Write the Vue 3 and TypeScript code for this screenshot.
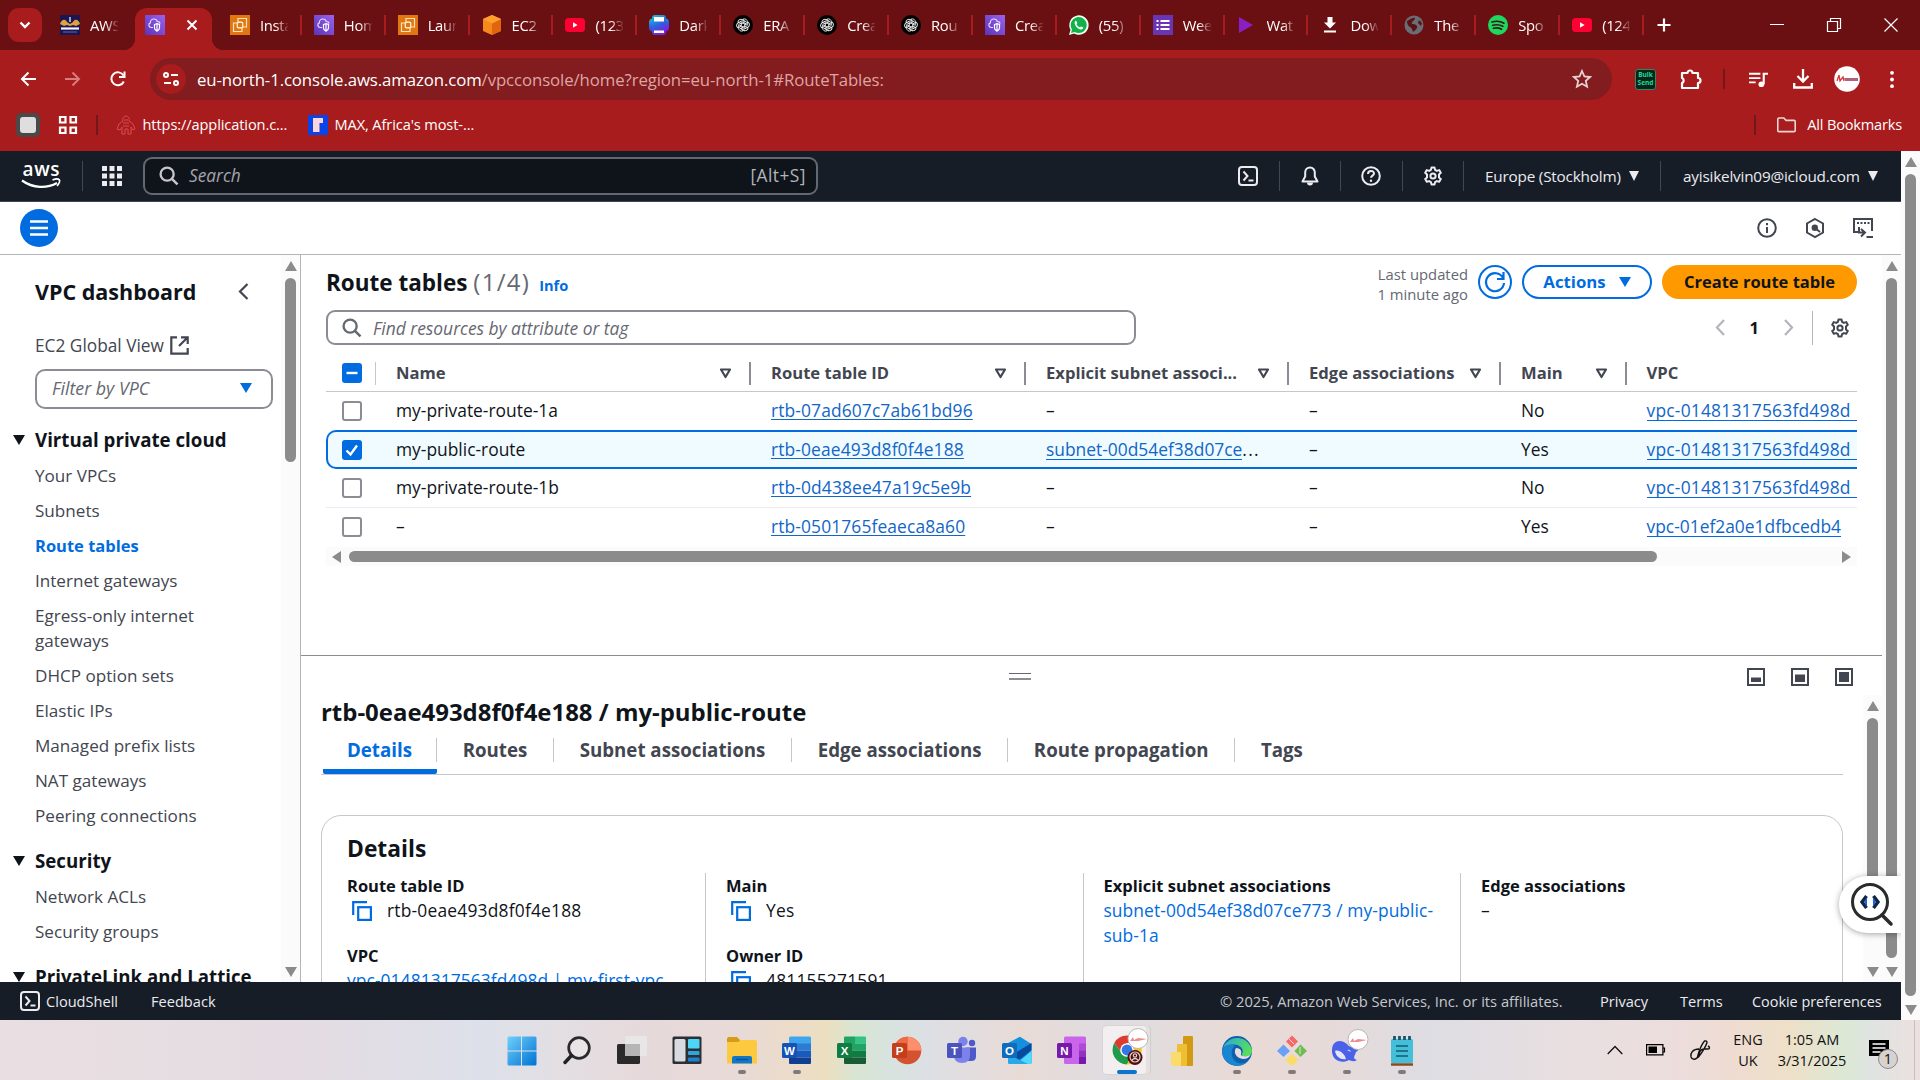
<script setup lang="ts">
interface BrowserTab { icon: string; label: string; active?: boolean; plain?: boolean }
interface RouteRow { name: string; id: string; subnet?: string; main: string; vpc: string; selected?: boolean; cut?: boolean }
interface TaskItem { icon: string; running?: boolean; active?: boolean }

const vpcIcon = '<defs><linearGradient id="vp" x1="0" y1="1" x2="1" y2="0"><stop offset="0" stop-color="#5a34b8"/><stop offset="1" stop-color="#9a62f0"/></linearGradient></defs><rect width="20" height="20" fill="url(#vp)"/><path d="M8 12.500H6.300a2.400 2.400 0 0 1-1-4.600C5.300 5.800 6.800 4 8.900 4c1.700 0 3 1 3.400 2.500 1.500-.1 2.500.7 2.900 2" fill="none" stroke="#e9dcff" stroke-width="1.200"/><path d="M9.500 9.500 12 8.600l2.500.9v3.500c0 1.500-1.200 2.400-2.500 3.100-1.300-.7-2.500-1.600-2.500-3.100zM12 8.800v7" fill="none" stroke="#fff" stroke-width="1.200"/>'
const ec2Icon = '<rect width="20" height="20" fill="#e0780f"/><path d="M8 7V3.500h8.500V12H13M7 8H3.500v8.500H12V13" fill="none" stroke="#ffe2bd" stroke-width="1.200"/><rect x="7.300" y="7.300" width="5.400" height="5.400" rx="1" fill="none" stroke="#ffe9cd" stroke-width="1.400"/>'
const ytIcon = '<rect y="3" width="20" height="14" rx="3.500" fill="#ff0033"/><path d="M8 7.300v5.400l4.600-2.700z" fill="#fff"/>'
const petal = [0, 60, 120, 180, 240, 300].map(a => `<path d="M10 4.200c2-1 4.300.3 4.300 2.700v3.500L10 8z" transform="rotate(${a} 10 10)"/>`).join('')
const gptIcon = `<circle cx="10" cy="10" r="10" fill="#000"/><g fill="none" stroke="#e8e8e8" stroke-width="1">${petal}</g>`

const favicons: Record<string, string> = {
  mentor: '<rect width="20" height="20" fill="#1c1550"/><path d="M0 9c1-4 5-6 7-2l3 2 3-2c2-4 6-2 7 2l-4 2-3-1-3 1-3-1-3 1z" fill="#e2a13c"/><path d="M10 2v5" stroke="#c9d3f3" stroke-width="1.500"/><path d="M1 13.500h18" stroke="#f1f1ff" stroke-width="2.200"/><path d="M3 17h14" stroke="#5f66b8"/>',
  vpc: vpcIcon,
  ec2: ec2Icon,
  cube: '<path d="M10 0 19 4v12l-9 4-9-4V4z" fill="#f58a1c"/><path d="M10 8.500v11.500l9-4V4z" fill="#e2640f"/><path d="M10 0 19 4l-9 4.500L1 4z" fill="#ff9f2e"/>',
  yt: ytIcon,
  printer: '<defs><linearGradient id="dk" x1="0" y1="0" x2=".4" y2="1"><stop offset="0" stop-color="#17c3d8"/><stop offset=".6" stop-color="#2f5fe0"/><stop offset="1" stop-color="#7a21dd"/></linearGradient></defs><rect x="0" y="3.500" width="20" height="13" rx="4" fill="url(#dk)"/><rect x="3" width="14" height="20" rx="3" fill="url(#dk)"/><rect x="5" y="2" width="10" height="4.500" fill="#fff"/><rect x="5" y="15.500" width="10" height="2.500" fill="#fff"/>',
  gpt: gptIcon,
  wa: '<path d="M0 20 1.500 14.800A9.700 9.700 0 1 1 5.200 18.500z" fill="#f2fff4"/><path d="M2 18l1-3.600A8 8 0 1 1 5.800 17z" fill="#12b24a"/><path d="M7 5.500 8.300 8l-.8 1.200c.8 1.500 1.800 2.500 3.400 3.200l1.200-1 2.300 1.200c-.3 1.700-1.700 2.200-3.200 1.800C8.500 13.600 6.300 11.300 5.700 8.500 5.500 7 6 6 7 5.500z" fill="#fff"/>',
  form: '<rect width="20" height="20" fill="#6a35b5"/><path d="M7.500 6h9M7.500 10h9M7.500 14h9" stroke="#fff" stroke-width="2"/><path d="M3.500 6h2M3.500 10h2M3.500 14h2" stroke="#fff" stroke-width="2"/>',
  play: '<path d="M2 2v16l14-8z" fill="#8a1fc4"/>',
  down: '<path d="M7.500 2h5v5.500H16L10 13.500 4 7.500h3.500zM4 15.500h12v2H4z" fill="#fff"/>',
  globe: '<circle cx="10" cy="10" r="9.500" fill="#6b6d74"/><path d="M3 6c3-1 5-4 8-3 0 3-4 3-3 6 3 0 6 1 5 4-1 2-3 3-4 4-1-3-1-4-3-5s-3-3-3-6zM15 5l3 3-1 3-3-3z" fill="#5b1215"/>',
  spot: '<circle cx="10" cy="10" r="10" fill="#1ed760"/><path d="M4 7c4-1.200 8.500-.8 12 1.200M4.800 10.300c3.500-1 7-.6 10 1M5.500 13.300c2.800-.7 5.500-.4 8 1" stroke="#3c1515" stroke-width="1.700" fill="none" stroke-linecap="round"/>',
}

const tabs: BrowserTab[] = [
  { icon: 'mentor', label: 'AWS', plain: true },
  { icon: 'vpc', label: '', active: true, plain: true },
  { icon: 'ec2', label: 'Insta' },
  { icon: 'vpc', label: 'Hom' },
  { icon: 'ec2', label: 'Laun' },
  { icon: 'cube', label: 'EC2' },
  { icon: 'yt', label: '(123' },
  { icon: 'printer', label: 'Dark' },
  { icon: 'gpt', label: 'ERA' },
  { icon: 'gpt', label: 'Crea' },
  { icon: 'gpt', label: 'Rou' },
  { icon: 'vpc', label: 'Crea' },
  { icon: 'wa', label: '(55)' },
  { icon: 'form', label: 'Wee' },
  { icon: 'play', label: 'Wat' },
  { icon: 'down', label: 'Dow' },
  { icon: 'globe', label: 'The' },
  { icon: 'spot', label: 'Spo' },
  { icon: 'yt', label: '(124' },
]

const vpcLinks = ['Your VPCs', 'Subnets', 'Route tables', 'Internet gateways', 'Egress-only internet gateways', 'DHCP option sets', 'Elastic IPs', 'Managed prefix lists', 'NAT gateways', 'Peering connections']
const securityLinks = ['Network ACLs', 'Security groups']

const columns = ['Name', 'Route table ID', 'Explicit subnet associ...', 'Edge associations', 'Main', 'VPC']
const rows: RouteRow[] = [
  { name: 'my-private-route-1a', id: 'rtb-07ad607c7ab61bd96', main: 'No', vpc: 'vpc-01481317563fd498d', cut: true },
  { name: 'my-public-route', id: 'rtb-0eae493d8f0f4e188', subnet: 'subnet-00d54ef38d07ce', main: 'Yes', vpc: 'vpc-01481317563fd498d', selected: true, cut: true },
  { name: 'my-private-route-1b', id: 'rtb-0d438ee47a19c5e9b', main: 'No', vpc: 'vpc-01481317563fd498d', cut: true },
  { name: '–', id: 'rtb-0501765feaeca8a60', main: 'Yes', vpc: 'vpc-01ef2a0e1dfbcedb4' },
]
const detailTabs = ['Details', 'Routes', 'Subnet associations', 'Edge associations', 'Route propagation', 'Tags']

const gear = '<path d="M8.500 1.500h3l.6 2.400 1.700 1 2.400-.8 1.600 2.700-1.800 1.700v2.900l1.800 1.700-1.600 2.700-2.400-.7-1.700 1-.6 2.400h-3l-.6-2.400-1.700-1-2.400.7-1.600-2.700L4 11.400V8.500L2.200 6.800l1.600-2.700 2.400.8 1.700-1z" fill="none" stroke="currentColor" stroke-width="2" stroke-linejoin="round"/><circle cx="10" cy="10" r="2.600" fill="none" stroke="currentColor" stroke-width="2"/>'
const shell = '<rect x="1" y="1" width="18" height="18" rx="3" fill="none" stroke="currentColor" stroke-width="2"/><path d="M5.500 5.500 9.500 10l-4 4.500M10.500 14.500h5" fill="none" stroke="currentColor" stroke-width="2"/>'
const copy = '<path d="M1.200 14V1.200H15" fill="none" stroke="currentColor" stroke-width="2.200"/><rect x="6.200" y="6.200" width="12.700" height="12.700" fill="none" stroke="currentColor" stroke-width="2.200"/>'
const lens = '<circle cx="7.700" cy="7.700" r="6.200" fill="none" stroke="currentColor" stroke-width="2.200"/><path d="M12 12l5.500 5.500" stroke="currentColor" stroke-width="2.400"/>'

const letter = (l: string, c: string) => `<rect x="0" y="7" width="15" height="15" rx="1.500" fill="${c}"/><text x="7.500" y="18.600" font-family="Liberation Sans" font-weight="700" font-size="11.500" fill="#fff" text-anchor="middle">${l}</text>`
const taskIcons: Record<string, string> = {
  start: '<defs><linearGradient id="wn" x1="0" y1="0" x2="1" y2="1"><stop offset="0" stop-color="#6fd0fb"/><stop offset="1" stop-color="#0072d3"/></linearGradient></defs><path d="M.5 2q0-1.500 1.500-1.500h12V14.500H.5zM15 .5h13q1.500 0 1.500 1.500v12.500H15zM.5 15.500H14v14H2q-1.500 0-1.500-1.500zM15 15.500h14.500V28q0 1.500-1.500 1.500H15z" fill="url(#wn)"/>',
  search: '<circle cx="17" cy="12" r="10.300" fill="#e9e4e6" stroke="#2a2a2c" stroke-width="2.700"/><path d="M9.500 19.500 3 26.500" stroke="#222" stroke-width="3.400" stroke-linecap="round"/>',
  desk: '<rect x="0" y="8" width="23" height="20" rx="1.500" fill="#2a2a2a"/><rect x="8" y="0" width="22" height="20" rx="1.500" fill="#e8e8e8" opacity=".85"/><path d="M8 8h15v12H8z" fill="#b5b5b5"/>',
  widget: '<rect x=".5" y=".5" width="29" height="27.500" rx="1.500" fill="#2d3033"/><rect x="2.500" y="3" width="11" height="22.500" rx="1.500" fill="#d9dbe0"/><rect x="16" y="3" width="11.500" height="9.500" rx="1" fill="#4dd5fa"/><rect x="16" y="15" width="11.500" height="4" rx="1" fill="#2ea5df"/><rect x="16" y="21.500" width="11.500" height="4" rx="1" fill="#1c82d2"/>',
  folder: '<path d="M0 3q0-2 2-2h8l3 3v6H0z" fill="#d79a1b"/><path d="M0 6h11l3-2h14q2 0 2 2v21.500H0z" fill="#fdc93f"/><path d="M5 27.500V22q0-2 2-2h16q2 0 2 2v5.500z" fill="#1476c6"/><path d="M9 23.500h12" stroke="#0b5391" stroke-width="1.500"/>',
  word: '<path d="M7 2q0-1.500 1.500-1.500h19.500q1 0 1 1.500v6H7z" fill="#41a5ee"/><path d="M7 7.500h22v7H7z" fill="#2b7cd3"/><path d="M7 14.500h22v7H7z" fill="#185abd"/><path d="M7 21.500h22V27q0 1-1 1H8q-1 0-1-1z" fill="#103f91"/>' + letter('W', '#1553b4'),
  excel: '<path d="M7 1.500q0-1 1-1h10v14H7z" fill="#21a366"/><path d="M18 .5h10q1 0 1 1v6H18z" fill="#33c481"/><path d="M18 7.500h11v7H18z" fill="#21a366"/><path d="M7 14.500h22v7H7z" fill="#107c41"/><path d="M7 21.500h22V27q0 1-1 1H8q-1 0-1-1z" fill="#185c37"/>' + letter('X', '#107c41'),
  ppt: '<circle cx="15.500" cy="14.500" r="13.800" fill="#d35230"/><path d="M15.500.7a13.800 13.800 0 0 1 13.800 13.800H15.500z" fill="#ff8f6b"/><path d="M15.500.7v13.800H1.700A13.800 13.800 0 0 1 15.500.7z" fill="#ed6c47"/>' + letter('P', '#c43e1c'),
  teams: '<circle cx="16" cy="5.500" r="4.700" fill="#7b83eb"/><circle cx="25" cy="7" r="3.200" fill="#5059c9"/><path d="M19 11.500h10v9q0 4.500-5 4.500h-4z" fill="#5059c9"/><path d="M7 11.500h16V19q0 8-8 8t-8-8z" fill="#7b83eb"/>' + letter('T', '#4b53bc'),
  outlook: '<path d="M6 7 18 .8 29.500 8v18.500q0 1.500-1.500 1.500H8q-2 0-2-2z" fill="#1490df"/><path d="M10 19 29.500 7v7L16 25z" fill="#0a4a9e"/><path d="M14 28 29.500 15v11.500q0 1.500-1.500 1.500z" fill="#50d9ff"/><path d="M6 18l20 10H8q-2 0-2-2z" fill="#28a8ea"/>' + letter('O', '#0f6cbd'),
  onenote: '<rect x="7" y=".5" width="22" height="27.500" rx="1.500" fill="#ca64ea"/><path d="M22 7.500h7v7h-7z" fill="#ae4bd5"/><path d="M22 14.500h7v6.500h-7z" fill="#9332bf"/><path d="M22 21h7v6q0 1-1 1h-6z" fill="#7719aa"/>' + letter('N', '#7719aa'),
  chrome: '<circle cx="15" cy="15" r="14.500" fill="#fff"/><path d="M15 .5A14.500 14.500 0 0 1 28 8H15L9 17 2.200 8A14.600 14.600 0 0 1 15 .5z" fill="#de3b30"/><path d="M2.200 8A14.600 14.600 0 0 0 15 29.500l6-11.500-12-1z" fill="#219a4a"/><path d="M28 8a14.600 14.600 0 0 1-13 21.500L21.500 15 18 8z" fill="#fbc116"/><circle cx="15" cy="15" r="6.800" fill="#fff"/><circle cx="15" cy="15" r="5.400" fill="#3277e6"/><circle cx="26" cy="3.500" r="10" fill="#fff" stroke="#b9b9b9"/><path d="M18 6l3-4 1 3 4-2 9 1-9 2z" fill="#ee8c8c"/><circle cx="23" cy="22.500" r="7.500" fill="#4d1010"/><circle cx="23" cy="22" r="5" fill="none" stroke="#e5cfcf" stroke-width="1.200"/><circle cx="23" cy="20.500" r="1.700" fill="none" stroke="#e5cfcf" stroke-width="1.200"/><path d="M20 25q3-3 6 0" stroke="#e5cfcf" stroke-width="1.300" fill="none"/>',
  bi: '<rect x="16" y="0" width="10" height="30" rx="1" fill="#d29a13"/><rect x="10" y="8" width="10" height="22" rx="1" fill="#efbf33"/><rect x="4" y="16" width="10" height="14" rx="1" fill="#fbdc6a"/>',
  edge: '<defs><linearGradient id="eg" x1="0" y1="0" x2="1" y2=".4"><stop offset="0" stop-color="#2ba6dd"/><stop offset="1" stop-color="#57dd5d"/></linearGradient></defs><circle cx="15" cy="15" r="15" fill="#0f5fae"/><path d="M1 12A15 15 0 0 1 30 15c0 5-5 6-9 5-2-1-1-2-.500-3C22 13 18 8.500 12 8.500 7 8.500 3 10 1 12z" fill="url(#eg)"/><path d="M0 15C2 9 9 7 13 10c-4 2-5 10 0 15 3 3 8 3 12 1A15 15 0 0 1 0 15z" fill="#1a86cf"/><path d="M14 12c5 0 6 4 5 6s4 3.500 9.500 1c-2 4-7 5-11 3s-6-6-3.500-10z" fill="#e6dcdd"/>',
  git: '<path d="M15 0l6 6-6 6-6-6z" fill="#f4686a" transform="translate(0 -.5)"/><path d="M6.500 8.500l6.500 6.500-6.500 6L0 15z" fill="#6ba0f7"/><path d="M23.500 8.500 30 15l-6.500 6-6-6z" fill="#6fbb55"/><path d="M15 18l6.500 6L15 30l-6.500-6z" fill="#fbdc67"/><path d="M12 3l5 5M23 11v7" stroke="#fff" stroke-width="1" opacity=".7"/>',
  whale: '<path d="M1 9c3-5 9-5 14-1 2 3 4 3 6 2 2 0 4-1 7-3 0 5-2 8-4 9-1 3-2 4-2 6 1 1 2 2 3 2-3 2-6 1-8 0C10 28 1 25 0 16c0-3 0-5 1-7z" fill="#4a62e8"/><path d="M3 15c4-2 10 3 11 8-5 1-10-2-11-8zM15 14q3-1 4 2" fill="#e7e4f6"/><circle cx="26" cy="3.500" r="10" fill="#fff" stroke="#b9b9b9"/><path d="M18 6l3-4 1 3 4-2 9 1-9 2z" fill="#ee8c8c"/>',
  note: '<rect x="4" y="3" width="22" height="24" rx="1.500" fill="#43bfd9"/><path d="M4 28.500h22" stroke="#8a4a1c" stroke-width="2.500"/><path d="M9 10h12M9 15h12M9 20h12" stroke="#155c72" stroke-width="1.700"/><path d="M7.500 0v4M12.500 0v4M17.500 0v4M22.500 0v4" stroke="#1c5567" stroke-width="2.800"/>',
}
const tasks: TaskItem[] = [
  { icon: 'start' }, { icon: 'search' }, { icon: 'desk' }, { icon: 'widget' },
  { icon: 'folder', running: true }, { icon: 'word', running: true }, { icon: 'excel' }, { icon: 'ppt' },
  { icon: 'teams' }, { icon: 'outlook' }, { icon: 'onenote' }, { icon: 'chrome', active: true },
  { icon: 'bi' }, { icon: 'edge', running: true }, { icon: 'git', running: true }, { icon: 'whale', running: true }, { icon: 'note', running: true },
]
</script>

<template>
  <div class="screen">
    <div class="tabstrip">
      <button class="tab-search"><svg width="12" height="8" viewBox="0 0 12 8"><path d="M1.500 1.500 6 6l4.500-4.500" fill="none" stroke="#fff" stroke-width="2.400" /></svg></button>
      <div v-for="(t, i) in tabs" :key="i" class="tab" :class="{ active: t.active, plain: t.plain }">
        <svg class="favicon" viewBox="0 0 20 20" preserveAspectRatio="none" v-html="favicons[t.icon]"></svg>
        <span v-if="!t.active" class="tab-label">{{ t.label }}</span>
        <svg v-else class="tab-close" viewBox="0 0 12 12"><path d="M1.500 1.500l9 9M10.500 1.500l-9 9" stroke="#fff" stroke-width="2" /></svg>
      </div>
      <svg class="new-tab" viewBox="0 0 14 14"><path d="M7 .5v13M.5 7h13" stroke="#fff" stroke-width="2.200" /></svg>
      <div class="win-controls">
        <svg width="14" height="14"><path d="M0 6.500h14" stroke="#fff" /></svg>
        <svg width="14" height="14"><path d="M.5 3.500h10v10H.5zM3.500 3.500v-3h10v10h-3" fill="none" stroke="#fff" stroke-width="1.200" /></svg>
        <svg width="14" height="14"><path d="M.5.5l13 13M13.500.5l-13 13" stroke="#fff" stroke-width="1.200" /></svg>
      </div>
    </div>

    <div class="toolbar">
      <svg class="nav" viewBox="0 0 16 16"><path d="M16 8H2M8.500 1.500 2 8l6.500 6.500" fill="none" stroke="#fff" stroke-width="2" /></svg>
      <svg class="nav" viewBox="0 0 16 16"><path d="M0 8h14M7.500 1.500 14 8l-6.500 6.500" fill="none" stroke="#d97c7c" stroke-width="2" /></svg>
      <svg class="nav" viewBox="0 0 16 16"><path d="M13.800 10.500A6.500 6.500 0 1 1 13.500 4.500M14.500.5v5.500H9" fill="none" stroke="#fff" stroke-width="2" /></svg>
      <div class="omnibox">
        <span class="tune"><svg width="16" height="14" viewBox="0 0 16 14"><circle cx="3" cy="3" r="2" /><path d="M8 3h7M1 11h7" /><circle cx="13" cy="11" r="2" /></svg></span>
        <span class="url">eu-north-1.console.aws.amazon.com<i>/vpcconsole/home?region=eu-north-1#RouteTables:</i></span>
        <svg class="star" viewBox="0 0 20 20"><path d="M10 2l2.400 5.400 5.800.6-4.400 3.900 1.300 5.800-5.100-3-5.100 3 1.300-5.800L1.800 8l5.800-.6z" fill="none" stroke="#e8d0d0" stroke-width="1.800" /></svg>
      </div>
      <span class="bulk">Bulk<br />Send</span>
      <svg class="puzzle" viewBox="0 0 22 22"><path d="M2 5h5.500a2.500 2.500 0 0 1 5 0H18v5a2.500 2.500 0 0 1 0 5v5H2v-5a2.700 2.700 0 0 0 0-5z" fill="none" stroke="#fff" stroke-width="2.200" stroke-linejoin="round" /></svg>
      <span class="vline"></span>
      <svg class="music" viewBox="0 0 20 20"><path d="M0 4h12M0 8.500h12M0 13h7" stroke="#fff" stroke-width="2" /><path d="M15.500 15V4H20" fill="none" stroke="#fff" stroke-width="2.200" /><circle cx="13" cy="15" r="3" fill="#fff" /></svg>
      <svg class="dl" viewBox="0 0 20 20"><path d="M10 0v12M4.500 7l5.500 5.500L15.500 7M1.200 14v4.500h17.600V14" fill="none" stroke="#fff" stroke-width="2.300" /></svg>
      <svg class="avatar" viewBox="0 0 26 26"><circle cx="13" cy="13" r="12.800" fill="#fff" /><path d="M3 15l2-6 1 6 3-4 1 4" fill="none" stroke="#d33" stroke-width="1.300" /><path d="M10 12h14v3H11z" fill="#b0627a" /></svg>
      <svg class="dots" viewBox="0 0 6 20"><circle cx="3" cy="3" r="2" /><circle cx="3" cy="10" r="2" /><circle cx="3" cy="17" r="2" /></svg>
    </div>

    <div class="bookmarks">
      <span class="stop"><span></span></span>
      <svg class="apps" viewBox="0 0 20 20"><path d="M2 2h5.500v5.500H2zM12.500 2H18v5.500h-5.500zM2 12.500h5.500V18H2zM12.500 12.500H18V18h-5.500z" fill="none" stroke="#fff" stroke-width="2.200" /></svg>
      <span class="vline"></span>
      <svg class="bm-icon" viewBox="0 0 20 20"><path d="M10 1a3.500 3.500 0 0 1 3 5l4 3 2 5-2 1-2-3v7h-3v-5H9v5H6v-7l-2 3-3-1 2-5 4-3a3.500 3.500 0 0 1 3-5zM7 8h6M8 5h4M7 11h6" fill="none" stroke="#d84a4e" stroke-width="1" /></svg>
      <span class="bm-text first">https://application.c...</span>
      <svg class="bm-icon blue" viewBox="0 0 20 20"><rect width="20" height="20" fill="#0a43e8" /><path d="M5 3h10v5h-3.500v9H5z" fill="#fbd5dc" /></svg>
      <span class="bm-text">MAX, Africa's most-...</span>
      <span class="vline right"></span>
      <svg class="folder" viewBox="0 0 22 18"><path d="M1.200 2.500q0-1.300 1.300-1.300h5.500l2.500 2.600h9q1.300 0 1.300 1.300v10q0 1.300-1.300 1.300h-17q-1.300 0-1.300-1.300z" fill="none" stroke="#ecd6d6" stroke-width="1.800" /></svg>
      <span class="bm-text all">All Bookmarks</span>
    </div>

    <div class="viewport">
      <div class="page">
        <header class="aws-header">
          <svg class="aws-logo" viewBox="0 0 40 28"><text x="20" y="14" text-anchor="middle" font-family="Open Sans" font-weight="600" font-size="19" fill="#fff" textLength="37">aws</text><path d="M1 18.500c11 8 25 8 35 2.500" fill="none" stroke="#fff" stroke-width="2.300" /><path d="M31.500 18c3-1.200 6-1 6.800-.2.700 1.200-.5 4.200-2.200 6.200" fill="none" stroke="#fff" stroke-width="1.700" /></svg>
          <span class="hsep"></span>
          <svg class="grid9" viewBox="0 0 20 20"><path d="M0 0h5v5H0zM7.500 0h5v5h-5zM15 0h5v5h-5zM0 7.500h5v5H0zM7.500 7.500h5v5h-5zM15 7.500h5v5h-5zM0 15h5v5H0zM7.500 15h5v5h-5zM15 15h5v5h-5z" fill="#ebebf0" /></svg>
          <div class="global-search">
            <svg width="19" height="19" viewBox="0 0 18 18" v-html="lens"></svg>
            <em>Search</em><span>[Alt+S]</span>
          </div>
          <div class="header-icons">
            <span class="hicon"><svg viewBox="0 0 20 20" v-html="shell"></svg></span>
            <span class="hicon"><svg viewBox="0 0 20 20"><path d="M10 1.500c-3 0-4.800 2.200-4.800 5v4L2.500 15.500h15L14.800 10.500v-4c0-2.800-1.800-5-4.800-5z" fill="none" stroke="currentColor" stroke-width="2" stroke-linejoin="round" /><path d="M7 16.500a3 3 0 0 0 6 0z" fill="currentColor" /></svg></span>
            <span class="hicon"><svg viewBox="0 0 20 20"><circle cx="10" cy="10" r="8.800" fill="none" stroke="currentColor" stroke-width="2" /><path d="M7 8c0-4 6-4 6-.5 0 2-3 2.200-3 4.300" fill="none" stroke="currentColor" stroke-width="2" /><circle cx="10" cy="14.700" r="1.200" fill="currentColor" /></svg></span>
            <span class="hicon"><svg viewBox="0 0 20 20" v-html="gear"></svg></span>
          </div>
          <span class="region">Europe (Stockholm)<b class="caret"></b></span>
          <span class="account">ayisikelvin09@icloud.com<b class="caret"></b></span>
        </header>

        <div class="subbar">
          <button class="burger"><svg width="18" height="16" viewBox="0 0 18 16"><path d="M0 1.500h18M0 8h18M0 14.500h18" stroke="#fff" stroke-width="2.300" /></svg></button>
          <svg class="tool" viewBox="0 0 20 20"><circle cx="10" cy="10" r="8.800" fill="none" stroke="currentColor" stroke-width="2" /><path d="M10 9v6M10 5v2.200" stroke="currentColor" stroke-width="2" /></svg>
          <svg class="tool" viewBox="0 0 20 20"><path d="M10 1l8 4.500v9L10 19l-8-4.500v-9z" fill="none" stroke="currentColor" stroke-width="2" /><circle cx="9.800" cy="9.800" r="3.200" fill="currentColor" /><path d="M10 10l5 4" stroke="currentColor" stroke-width="2" /></svg>
          <svg class="tool" viewBox="0 0 20 20"><path d="M5 14H1V1h18v12M4 5h2M7.500 5h2M11 5h2M14.500 5h2" fill="none" stroke="currentColor" stroke-width="2" /><path d="M6 9v5.500h5M8 11l4 3.500L8 18.500M13.500 19H20" fill="none" stroke="currentColor" stroke-width="2" /></svg>
        </div>

        <div class="body">
          <nav class="sidebar">
            <div class="side-content">
              <div class="side-title">VPC dashboard<svg width="11" height="17" viewBox="0 0 11 17"><path d="M9.500 1 2 8.500 9.500 16" fill="none" stroke="#424650" stroke-width="2.200" /></svg></div>
              <div class="side-ext">EC2 Global View<svg width="19" height="19" viewBox="0 0 19 19"><path d="M7 1.300H1.300v16.400h16.400V12M11 1.300h6.700V8M17.500 1.500 9 10" fill="none" stroke="currentColor" stroke-width="2.200" /></svg></div>
              <div class="vpc-filter"><em>Filter by VPC</em><b class="caret blue"></b></div>
              <div class="side-head"><b class="caret"></b>Virtual private cloud</div>
              <a v-for="l in vpcLinks" :key="l" class="side-link" :class="{ current: l === 'Route tables' }">{{ l }}</a>
              <div class="side-head later"><b class="caret"></b>Security</div>
              <a v-for="l in securityLinks" :key="l" class="side-link">{{ l }}</a>
              <div class="side-head later"><b class="caret"></b>PrivateLink and Lattice</div>
            </div>
            <div class="scroll side-scroll"><i class="up"></i><span class="thumb"></span><i class="down"></i></div>
          </nav>

          <main class="content">
            <section class="list">
              <div class="list-head">
                <h1>Route tables <span>(1/4)</span></h1>
                <a class="info">Info</a>
                <div class="updated">Last updated<br />1 minute ago</div>
                <button class="refresh"><svg width="22" height="22" viewBox="0 0 22 22"><path d="M19 7A9 9 0 1 0 20 12M19.500 1v7H13" fill="none" stroke="#006ce0" stroke-width="2.200" /></svg></button>
                <button class="actions">Actions<b class="caret blue"></b></button>
                <button class="create">Create route table</button>
              </div>
              <div class="list-filter">
                <div class="find"><svg width="19" height="19" viewBox="0 0 18 18" v-html="lens"></svg><em>Find resources by attribute or tag</em></div>
                <div class="pager">
                  <svg width="10" height="17" viewBox="0 0 10 17"><path d="M9 1 2 8.500 9 16" fill="none" stroke="#b4b4bb" stroke-width="2.200" /></svg>
                  <b>1</b>
                  <svg width="10" height="17" viewBox="0 0 10 17"><path d="M1 1l7 7.500L1 16" fill="none" stroke="#b4b4bb" stroke-width="2.200" /></svg>
                  <span class="psep"></span>
                  <svg width="20" height="20" viewBox="0 0 20 20" v-html="gear"></svg>
                </div>
              </div>
              <div class="grid-row head">
                <div class="cell check"><span class="box on"><svg viewBox="0 0 20 20"><path d="M4.500 10h11" stroke="#fff" stroke-width="2.400" /></svg></span></div>
                <div v-for="(c, i) in columns" :key="c" class="cell">
                  <span class="col-name">{{ c }}</span>
                  <svg v-if="i < 5" width="13" height="11" viewBox="0 0 13 11"><path d="M2 1.500h9L6.500 9z" fill="none" stroke="#424650" stroke-width="2.200" stroke-linejoin="round" /></svg>
                </div>
              </div>
              <div v-for="r in rows" :key="r.id" class="grid-row" :class="{ selected: r.selected }">
                <div class="cell check"><span class="box" :class="{ on: r.selected }"><svg v-if="r.selected" viewBox="0 0 20 20"><path d="M4.500 10.500 8.500 14.500 15 5.500" fill="none" stroke="#fff" stroke-width="2.400" /></svg></span></div>
                <div class="cell">{{ r.name }}</div>
                <div class="cell"><a class="id">{{ r.id }}</a></div>
                <div class="cell"><template v-if="r.subnet"><a class="low">{{ r.subnet }}</a><span class="more">...</span></template><template v-else>–</template></div>
                <div class="cell">–</div>
                <div class="cell">{{ r.main }}</div>
                <div class="cell vpc"><a class="low" :class="{ cut: r.cut }">{{ r.vpc }}</a></div>
              </div>
              <div class="hscroll"><i class="left"></i><span class="hthumb"></span><i class="right"></i></div>
            </section>

            <section class="split">
              <div class="split-bar">
                <span class="handle"></span>
                <div class="split-icons">
                  <svg viewBox="0 0 18 18"><path d="M1 1h16v16H1z" fill="none" stroke="#424650" stroke-width="2" /><path d="M4 9.500h10v4.500H4z" fill="#424650" /></svg>
                  <svg viewBox="0 0 18 18"><path d="M1 1h16v16H1z" fill="none" stroke="#424650" stroke-width="2" /><path d="M4 6.500h10V14H4z" fill="#424650" /></svg>
                  <svg viewBox="0 0 18 18"><path d="M1 1h16v16H1z" fill="none" stroke="#424650" stroke-width="2" /><path d="M4 4h10v10H4z" fill="#424650" /></svg>
                </div>
              </div>
              <div class="split-body">
                <div class="split-content">
                  <h2>rtb-0eae493d8f0f4e188 / my-public-route</h2>
                  <div class="dtabs"><div v-for="d in detailTabs" :key="d" class="dtab" :class="{ current: d === 'Details' }"><span>{{ d }}</span></div></div>
                  <div class="card">
                    <h3>Details</h3>
                    <div class="facts">
                      <div class="fact">
                        <label>Route table ID</label>
                        <p class="copyable"><svg viewBox="0 0 20 20" v-html="copy"></svg>rtb-0eae493d8f0f4e188</p>
                        <label>VPC</label>
                        <p class="link">vpc-01481317563fd498d | my-first-vpc</p>
                      </div>
                      <div class="fact">
                        <label>Main</label>
                        <p class="copyable"><svg viewBox="0 0 20 20" v-html="copy"></svg>Yes</p>
                        <label>Owner ID</label>
                        <p class="copyable"><svg viewBox="0 0 20 20" v-html="copy"></svg>481155271591</p>
                      </div>
                      <div class="fact">
                        <label>Explicit subnet associations</label>
                        <p class="link">subnet-00d54ef38d07ce773 / my-public-<br />sub-1a</p>
                      </div>
                      <div class="fact">
                        <label>Edge associations</label>
                        <p>–</p>
                      </div>
                    </div>
                  </div>
                </div>
                <div class="scroll split-scroll"><i class="up"></i><span class="thumb"></span><i class="down"></i></div>
              </div>
            </section>
          </main>
          <div class="scroll main-scroll"><i class="up"></i><span class="thumb"></span><i class="down"></i></div>
          <div class="inspector">
            <svg width="44" height="46" viewBox="0 0 44 46"><circle cx="19" cy="20" r="17.500" fill="none" stroke="#2b2b2b" stroke-width="3" /><path d="M31 33l9 9" stroke="#2b2b2b" stroke-width="3.500" stroke-linecap="round" /><path d="M15.500 14 11 20l4.500 6" fill="none" stroke="#14233f" stroke-width="3.400" /><path d="M22.500 14l4.500 6-4.500 6" fill="none" stroke="#14233f" stroke-width="3.400" /><path d="M16 15.500v9L13 20zM22 15.500v9L25 20z" fill="#1a5fe0" /></svg>
          </div>
        </div>

        <footer class="footer">
          <svg width="20" height="20" viewBox="0 0 20 20" v-html="shell"></svg>
          <span class="f-shell">CloudShell</span><span class="f-feed">Feedback</span>
          <span class="f-copy">© 2025, Amazon Web Services, Inc. or its affiliates.</span>
          <span class="f-priv">Privacy</span><span class="f-terms">Terms</span><span class="f-cook">Cookie preferences</span>
        </footer>
      </div>
      <div class="scroll page-scroll"><i class="up"></i><span class="thumb"></span><i class="down"></i></div>
    </div>

    <div class="taskbar">
      <div class="tasks">
        <div v-for="t in tasks" :key="t.icon" class="task" :class="{ active: t.active, running: t.running }">
          <svg viewBox="0 0 30 30" v-html="taskIcons[t.icon]"></svg>
        </div>
      </div>
      <div class="tray">
        <svg class="chev" viewBox="0 0 16 10"><path d="M.7 9 8 1.500 15.300 9" fill="none" stroke="#111" stroke-width="1.300" /></svg>
        <svg class="battery" viewBox="0 0 19 12"><path d="M.6.600h16.300v10.300H.6zM17 4h1.500v4H17" fill="none" stroke="#000" stroke-width="1.200" /><path d="M2.500 2.500h8.500v6.500H2.500z" /></svg>
        <svg class="pen" viewBox="0 0 20 20"><path d="M7.500 17C9 11 11 5 14.500 1c1.500-.5 2.500.3 2.500 1.500-1.500 5-5 10-8.500 14.500zM9 9C3 9 0 13 1 17c1.500 4 7 2 8-2 0-3 2-6 5-6h4c2 0 2-2 0-3" fill="none" stroke="#111" stroke-width="1.400" /></svg>
        <div class="lang">ENG<br />UK</div>
        <div class="clock">1:05 AM<br />3/31/2025</div>
        <div class="notif"><svg width="20" height="20" viewBox="0 0 20 20"><path d="M0 0h20v16h-4v4l-4-4H0z" /><path d="M3.500 4h13M3.500 8h13M3.500 12h8" stroke="#fff" stroke-width="1.300" /></svg><span>1</span></div>
      </div>
    </div>
  </div>
</template>

<style>
body { margin: 0; overflow: hidden; }
</style>

<style scoped>
* { box-sizing: border-box; }
.screen { width: 1920px; height: 1080px; display: flex; flex-direction: column; overflow: hidden; background: #a81c1e; font-family: "Open Sans", "Noto Sans", sans-serif; color: #0f141a; white-space: nowrap; }
button { border: 0; padding: 0; font: inherit; color: inherit; display: flex; align-items: center; justify-content: center; }
svg { flex: none; display: block; overflow: visible; }
h1, h2, h3, p { margin: 0; }

/* browser chrome */
.tabstrip { height: 50px; flex: none; background: #6b1012; display: flex; align-items: center; }
.tab-search { width: 34px; height: 34px; margin: 0 6px 0 8px; border-radius: 11px; background: #a81c1e; flex: none; }
.tab { width: 83.900px; height: 20px; padding-left: 12px; display: flex; align-items: center; border-right: 2px solid #a81c1e; flex: none; }
.tab.plain { border-right-color: transparent; }
.tab.active { height: 42px; align-self: flex-end; background: #a81c1e; border: 0; border-radius: 12px 12px 0 0; width: 77px; margin: 0 6px 0 3px; padding: 0 0 8px 10px; position: relative; }
.tab.active::before, .tab.active::after { content: ""; position: absolute; bottom: 0; width: 12px; height: 12px; }
.tab.active::before { left: -12px; background: radial-gradient(circle at 0 0, transparent 12px, #a81c1e 12.500px); }
.tab.active::after { right: -12px; background: radial-gradient(circle at 100% 0, transparent 12px, #a81c1e 12.500px); }
.favicon { width: 20px; height: 20px; }
.tab-label { margin-left: 10px; width: 28px; overflow: hidden; color: #fff; font-size: 14.800px; letter-spacing: -.3px; line-height: 22px; mask-image: linear-gradient(90deg, #000 55%, transparent 105%); }
.tab-close { width: 12px; height: 12px; margin-left: 21px; }
.new-tab { width: 14px; height: 14px; margin-left: 13px; }
.win-controls { margin-left: auto; margin-right: 22px; display: flex; gap: 43px; }
.toolbar { height: 58px; flex: none; display: flex; align-items: center; padding-left: 19.500px; background: #a81c1e; }
.nav { width: 16px; height: 16px; margin-right: 29px; }
.omnibox { width: 1462px; height: 42px; margin-left: -4.500px; border-radius: 21px; background: #821c1e; display: flex; align-items: center; padding-left: 6px; }
.tune { width: 30px; height: 30px; border-radius: 50%; background: #a81c1e; display: flex; align-items: center; justify-content: center; }
.tune svg { fill: none; stroke: #fff; stroke-width: 2; }
.url { margin-left: 11px; color: #fff; font-size: 16.800px; letter-spacing: -.1px; }
.url i { font-style: normal; color: #dfa5a5; }
.star { width: 20px; height: 20px; margin-left: auto; margin-right: 20px; }
.bulk { width: 21px; height: 21px; margin-left: 23px; border: 1.500px solid #2b8b62; border-radius: 3px; background: #08241d; color: #1ddf8c; font-size: 6.500px; line-height: 7.500px; font-weight: 700; text-align: center; padding-top: 1.500px; }
.puzzle { width: 22px; height: 22px; margin-left: 24px; }
.vline { width: 2px; height: 20px; background: #74171a; margin-left: 21px; }
.music { width: 19px; height: 19px; margin-left: 24px; }
.dl { width: 20px; height: 20px; margin-left: 25px; }
.avatar { width: 26px; height: 26px; margin-left: 21px; }
.dots { width: 6px; height: 19px; margin-left: 29px; fill: #fff; }
.bookmarks { height: 43px; flex: none; display: flex; align-items: center; padding: 0 18px 10px 15.500px; color: #fff; font-size: 14.600px; }
.stop { width: 24px; height: 24px; border-radius: 5px; background: #4d4848; padding: 4px; }
.stop span { display: block; width: 16px; height: 16px; border-radius: 3px; background: #dedede; }
.apps { width: 20px; height: 20px; margin-left: 18px; }
.bookmarks .vline { margin-left: 18px; }
.bookmarks .vline.right { margin-left: auto; }
.bm-icon { width: 20px; height: 20px; margin-left: 18px; }
.bm-text { margin-left: 7px; letter-spacing: -.1px; padding-bottom: 1px; }
.bm-text.first { width: 144px; }
.bm-icon.blue { margin-left: 21px; }
.folder { width: 21px; height: 16px; margin-left: 20px; }
.bm-text.all { margin-left: 10px; letter-spacing: -.2px; }

/* scrollbars */
.viewport { height: 869px; flex: none; display: flex; background: #fff; }
.page { width: 1901px; display: flex; flex-direction: column; }
.scroll { width: 19px; flex: none; background: #fbfbfb; display: flex; flex-direction: column; align-items: center; padding: 6px 0 5px; }
.scroll i { width: 0; height: 0; border: 6px solid transparent; }
.scroll i.up { border-bottom: 10px solid #8b8b8b; border-top: 0; }
.scroll i.down { border-top: 10px solid #8b8b8b; border-bottom: 0; margin-top: auto; }
.thumb { width: 11px; border-radius: 6px; background: #8b8b8b; margin-top: 7px; }
.page-scroll .thumb { height: 822px; }
.side-scroll .thumb { height: 184px; }
.main-scroll .thumb { height: 680px; }
.split-scroll .thumb { height: 200px; }

/* console header */
.aws-header { height: 51px; flex: none; background: #161d26; border-bottom: 1px solid #424650; display: flex; align-items: center; padding: 0 0 1px 21px; color: #ebebf0; }
.aws-logo { width: 40px; height: 28px; }
.hsep { width: 1px; height: 30px; background: #424650; margin-left: 21px; }
.grid9 { width: 20px; height: 20px; margin-left: 19px; }
.global-search { width: 675px; height: 38px; margin-left: 21px; border: 2px solid #656871; border-radius: 9px; background: #0f141a; display: flex; align-items: center; padding: 0 12px 0 14px; color: #b4b4bb; font-size: 17.300px; }
.global-search svg { color: #c6c6cd; }
.global-search em { margin-left: 11px; color: #a4a4ad; }
.global-search span { margin-left: auto; letter-spacing: .5px; margin-right: -2px; }
.header-icons { display: flex; margin-left: 400px; }
.hicon { width: 61.500px; height: 30px; border-right: 1px solid #424650; display: flex; align-items: center; justify-content: center; }
.hicon svg { width: 20px; height: 20px; }
.region, .account { font-size: 15.300px; display: flex; align-items: center; height: 30px; letter-spacing: -.2px; font-weight: 500; }
.region { width: 197px; padding-left: 21px; border-right: 1px solid #424650; }
.account { padding-left: 22px; }
.caret { width: 0; height: 0; border: 6px solid transparent; border-top: 10px solid currentColor; border-bottom: 0; }
.region .caret, .account .caret { border-left-width: 5px; border-right-width: 5px; margin-left: 8px; }
.caret.blue { color: #006ce0; }
.subbar { height: 53px; flex: none; border-bottom: 1px solid #b4b4bb; display: flex; align-items: center; padding: 0 28.500px 0 20px; color: #424650; }
.burger { width: 38px; height: 38px; border-radius: 50%; background: #006ce0; margin-right: auto; }
.tool { width: 20px; height: 20px; margin-left: 28px; }

/* sidebar */
.body { height: 727px; flex: none; display: flex; overflow: hidden; position: relative; }
.sidebar { width: 301px; border-right: 1px solid #b4b4bb; display: flex; overflow: hidden; }
.side-content { width: 282px; padding: 21px 0 0 35px; color: #424650; font-size: 17.100px; }
.side-title { height: 30px; display: flex; align-items: center; justify-content: space-between; padding-right: 32px; font-size: 21.500px; font-weight: 700; color: #0f141a; }
.side-ext { height: 25px; margin-top: 27px; display: flex; align-items: center; gap: 6px; font-size: 17.300px; }
.vpc-filter { width: 238px; height: 40px; margin-top: 11px; border: 2px solid #8c8c94; border-radius: 10px; display: flex; align-items: center; justify-content: space-between; padding: 0 19px 2px 15px; color: #656871; font-size: 17.800px; }
.side-head { margin: 18px 0 11px -22px; height: 25px; display: flex; align-items: center; gap: 10px; font-size: 18.700px; font-weight: 700; color: #0f141a; }
.side-head.later { margin: 20px 0 11px -22px; }
.side-link { display: block; line-height: 25px; margin-bottom: 10px; width: 190px; white-space: normal; }
.side-link.current { color: #006ce0; font-weight: 700; font-size: 16.500px; }

/* resource list */
.content { width: 1581px; display: flex; flex-direction: column; }
.list { height: 400px; flex: none; padding: 10px 25px 0; }
.list-head { height: 34px; display: flex; align-items: center; }
h1 { font-size: 22.500px; line-height: 34px; font-weight: 700; }
h1 span { font-weight: 400; font-size: 24px; letter-spacing: 1.300px; color: #656871; }
.info { margin: 5px 0 0 9px; font-size: 14.600px; font-weight: 700; color: #006ce0; }
.updated { margin-left: auto; text-align: right; font-size: 14.800px; line-height: 20px; color: #656871; padding-top: 3px; }
.refresh { width: 34px; height: 34px; border: 2px solid #006ce0; border-radius: 50%; background: #fff; margin-left: 10px; }
.actions { width: 130px; height: 34px; border: 2px solid #006ce0; border-radius: 17px; background: #fff; color: #006ce0; font-weight: 700; font-size: 16.800px; margin-left: 10px; gap: 13px; padding-bottom: 1px; }
.create { width: 195px; height: 34px; border-radius: 17px; background: #f90; font-weight: 700; font-size: 16.500px; margin-left: 10px; padding-bottom: 2px; }
.list-filter { height: 35px; margin-top: 11px; display: flex; justify-content: space-between; }
.find { width: 810px; border: 2px solid #8c8c94; border-radius: 9px; display: flex; align-items: center; gap: 12px; padding-left: 14px; color: #656871; font-size: 17.400px; }
.pager { display: flex; align-items: center; padding-right: 7px; color: #424650; font-size: 16.500px; }
.pager b { margin: 0 25px 0 25px; color: #0f141a; }
.psep { width: 1px; height: 34px; background: #b4b4bb; margin: 0 17px 0 18px; }
.grid-row { height: 39px; display: grid; grid-template-columns: 50px 375px 275px 263px 212px 125.500px 230.500px; align-items: center; border-bottom: 1px solid #ebebf0; font-size: 17.400px; overflow: hidden; padding-bottom: 2px; }
.grid-row.head { height: 47px; padding: 10px 0 0; border-bottom-color: #c6c6cd; color: #424650; font-weight: 700; font-size: 16.600px; }
.head + .grid-row { height: 38px; border-bottom: 0; }
.grid-row:nth-last-child(2) { border-bottom-color: transparent; padding-bottom: 3px; }
.cell { padding-left: 20px; }
.cell.check { padding-left: 16px; }
.cell.check .box { position: relative; top: 1px; }
.head .cell { height: 23px; display: flex; align-items: center; justify-content: space-between; padding-right: 17px; border-right: 2px solid #8c8c94; }
.head .cell.check { border-right: 1px solid #c6c6cd; padding-right: 0; }
.head .cell.check .box { top: 0; }
.head .cell:last-child { border-right: 0; }
.col-name { padding-bottom: 2px; }
.box { display: block; flex: none; width: 20px; height: 20px; border: 2px solid #8c8c94; border-radius: 3px; background: #fff; }
.box.on { background: #006ce0; border: 0; }
.grid-row.selected { border: 2px solid #006ce0; border-right: 0; border-radius: 10px 0 0 10px; background: #f0fbff; grid-template-columns: 48px 375px 275px 263px 212px 125.500px 230.500px; }
.selected .cell.check { padding-left: 14px; }
.cell a { color: #1166c8; }
.cell a.id { text-decoration: underline; text-underline-offset: 2px; text-decoration-thickness: 1px; letter-spacing: .12px; }
.cell a.low { display: inline-block; line-height: 20px; border-bottom: 1px solid #006ce0; padding-top: 1px; }
.cell.vpc a.low { letter-spacing: 0; }
.cell.vpc a.cut { width: 211px; letter-spacing: .22px; }
.more { letter-spacing: 1.200px; }
.hscroll { height: 19px; background: #fbfbfb; display: flex; align-items: center; padding: 0 6px; }
.hscroll i { border: 6px solid transparent; width: 0; height: 0; }
.hscroll i.left { border-right: 9px solid #8b8b8b; border-left: 0; }
.hscroll i.right { border-left: 9px solid #8b8b8b; border-right: 0; margin-left: auto; }
.hthumb { width: 1308px; height: 11px; margin-left: 8px; border-radius: 6px; background: #8b8b8b; }

/* split panel */
.split { flex: 1; border-top: 1px solid #8c8c94; display: flex; flex-direction: column; min-height: 0; }
.split-bar { height: 39px; flex: none; display: flex; align-items: flex-start; }
.handle { width: 22px; height: 7px; margin: 17px 0 0 708px; border-top: 1px solid #656871; border-bottom: 2px solid #8c8c94; }
.split-icons { margin: 12px 29px 0 auto; display: flex; gap: 26px; }
.split-icons svg { width: 18px; height: 18px; }
.split-body { flex: 1; display: flex; min-height: 0; }
.split-content { width: 1562px; padding: 0 20px; overflow: hidden; }
h2 { font-size: 23.950px; line-height: 34px; font-weight: 700; }
.dtabs { height: 46px; display: flex; border-bottom: 1px solid #c6c6cd; }
.dtab { padding: 9px 0; color: #424650; font-size: 18.700px; font-weight: 700; }
.dtab span { display: block; line-height: 24px; padding: 0 25.700px; border-right: 1px solid #c6c6cd; }
.dtab:last-child span { border: 0; }
.dtab.current { color: #006ce0; border-bottom: 5px solid #006ce0; margin-left: 2px; padding-bottom: 7px; border-radius: 2px; }
.dtab.current span { padding: 0 24px; }
.card { height: 220px; margin-top: 40px; border: 1px solid #c6c6cd; border-radius: 20px; padding: 17px 0 0 25px; }
h3 { font-size: 22.800px; line-height: 32px; font-weight: 700; }
.facts { display: flex; margin-top: 8px; font-size: 16.500px; line-height: 25px; }
.fact { width: 377.500px; height: 200px; padding-left: 20px; border-left: 1px solid #c6c6cd; }
.fact p { font-size: 17.400px; letter-spacing: .08px; }
.fact:first-child { width: 358px; padding: 0; border: 0; }
label { display: block; font-weight: 700; }
.fact p + label { margin-top: 20px; }
.fact p.copyable { display: flex; align-items: center; gap: 15px; padding-left: 5px; letter-spacing: .2px; }
.copyable svg { width: 20px; height: 20px; color: #006ce0; }
.link { color: #006ce0; }
.inspector { position: absolute; left: 1839px; top: 621px; width: 62px; height: 57px; border-radius: 28px 0 0 28px; background: #fff; box-shadow: 0 1px 6px rgba(0, 0, 0, .35); padding: 6px 0 0 12px; }

.footer { height: 38px; flex: none; background: #161d26; display: flex; align-items: center; padding: 0 20px 0; color: #ebebf0; font-size: 14.600px; }
.f-shell { margin-left: 6px; width: 105px; }
.f-copy { margin-left: auto; color: #c6c6cd; width: 380px; font-size: 14.700px; }
.f-priv { width: 80px; }
.f-terms { width: 72px; }
.f-cook { width: 129px; font-size: 14.400px; }

/* taskbar */
.taskbar { height: 60px; flex: none; display: flex; color: #111; background: linear-gradient(90deg, #e9dfe2 0, #e4dce2 300px, #dde0ea 480px, #e3dfe3 560px, #e6d9db 640px, #e8dad6 740px, #ecdcc8 800px, #ecdfc0 825px, #d9e5d3 855px, #d8e3de 885px, #dddfe4 930px, #e8dbd6 1020px, #dfdce0 1110px, #e9dad5 1250px, #e6dad9 1330px, #dedde3 1430px, #e9dfe0 1580px, #ecdddc 1680px, #eedcd2 1730px, #eee0c8 1790px, #dce8d5 1845px, #dfe4e0 1870px, #ece0e0 1920px); }
.tasks { display: flex; margin-left: 494px; }
.task { width: 55.060px; display: flex; justify-content: center; align-items: flex-start; padding-top: 16px; position: relative; }
.task svg { width: 30px; height: 30px; }
.task::after { content: ""; position: absolute; bottom: 6px; width: 8px; height: 4px; border-radius: 2px; }
.task.running::after { background: #817a7b; }
.task.active::before { content: ""; position: absolute; left: 3px; top: 6px; width: 43px; height: 48px; border-radius: 4px; background: #f3eff0; box-shadow: 4px 0 0 #e6dfdf, 5px 0 0 #d3cccc, 0 0 0 1px #d9d3d5; }
.task.active svg { position: relative; top: -1px; }
.task.active::after { width: 20px; background: #0b74d1; }
.tray { margin-left: auto; display: flex; align-items: center; font-size: 14.500px; line-height: 21px; text-align: center; border-right: 1px solid #c9bfc0; margin-right: 5px; }
.chev { width: 16px; height: 10px; }
.battery { width: 19px; height: 12px; margin-left: 23px; }
.pen { width: 20px; height: 20px; margin-left: 25px; }
.lang { width: 36px; margin-left: 20px; }
.clock { width: 80px; margin-left: 6px; }
.notif { position: relative; margin: 0 25px 0 17px; width: 20px; }
.notif span { position: absolute; left: 9px; top: 9px; width: 20px; height: 20px; border-radius: 50%; border: 1px solid #8d8888; background: #d5d2d0; line-height: 18px; }
</style>
